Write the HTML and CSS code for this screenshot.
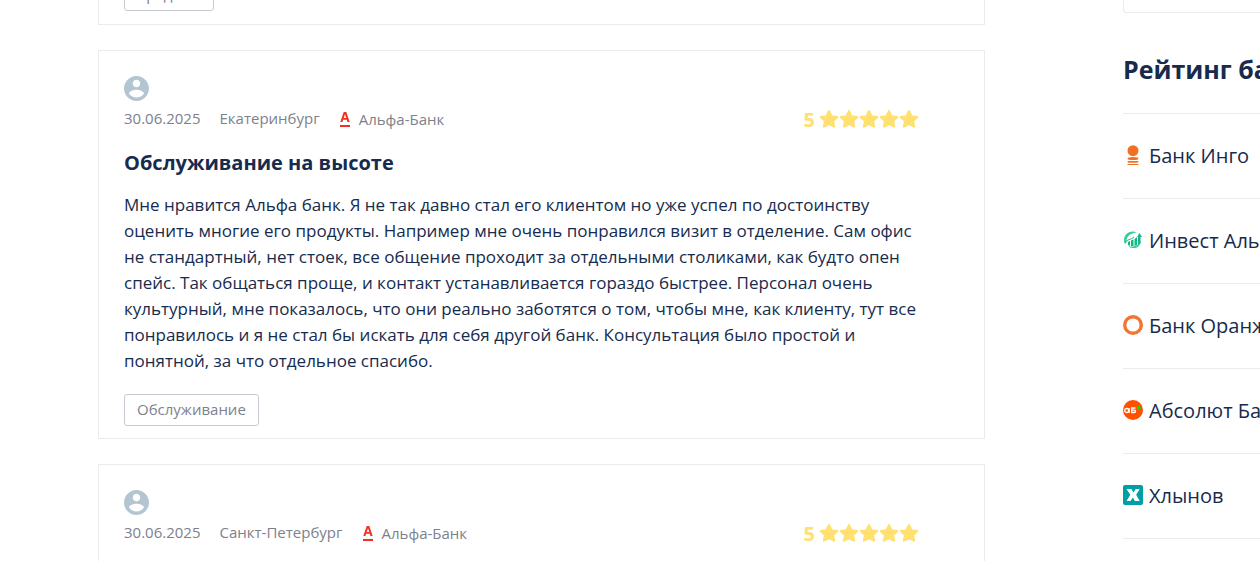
FILE: index.html
```html
<!doctype html>
<html lang="ru">
<head>
<meta charset="utf-8">
<title>Отзывы</title>
<link rel="stylesheet" href="styles.css">
</head>
<body>
<svg class="defs" width="0" height="0">
	<symbol id="user" viewBox="2 2 20 20"><path d="M12 2C6.500 2 2 6.500 2 12s4.500 10 10 10 10-4.500 10-10S17.500 2 12 2zm0 3c1.700 0 3 1.300 3 3s-1.300 3-3 3-3-1.300-3-3 1.300-3 3-3zm0 14.200c-2.500 0-4.700-1.300-6-3.200 0-2 4-3.100 6-3.100s6 1.100 6 3.100c-1.300 1.900-3.500 3.200-6 3.200z"/></symbol>
	<symbol id="alfa" viewBox="0 0 12 16"><path d="M1 14h10v2H1z"/><path fill-rule="evenodd" d="M4.700 1h2.600l3.400 10H8.500l-.7-2.200H4.100L3.400 11H1.300zM6 3.200L4.700 7.100h2.600z"/></symbol>
	<symbol id="star" viewBox="0 0 20 20"><path stroke-linejoin="round" d="M10 2l2.500 5.200 5.800.8-4.200 4 1 5.700L10 15l-5.100 2.700 1-5.700L1.700 8l5.800-.8z"/></symbol>
</svg>
<div class="page">
<main class="reviews">
	<article class="review">
		<a class="tag" href="#">Кредиты</a>
	</article>

	<article class="review">
		<svg class="user"><use href="#user"/></svg>
		<div class="info">
			<span class="meta">30.06.2025</span>
			<span class="meta">Екатеринбург</span>
			<a class="bank" href="#"><svg class="alfa"><use href="#alfa"/></svg>Альфа-Банк</a>
			<div class="rate">5<span class="stars"><svg><use href="#star"/></svg><svg><use href="#star"/></svg><svg><use href="#star"/></svg><svg><use href="#star"/></svg><svg><use href="#star"/></svg></span></div>
		</div>
		<h3>Обслуживание на высоте</h3>
		<p>Мне нравится Альфа банк. Я не так давно стал его клиентом но уже успел по достоинству оценить многие его продукты. Например мне очень понравился визит в отделение. Сам офис не стандартный, нет стоек, все общение проходит за отдельными столиками, как будто опен спейс. Так общаться проще, и контакт устанавливается гораздо быстрее. Персонал очень культурный, мне показалось, что они реально заботятся о том, чтобы мне, как клиенту, тут все понравилось и я не стал бы искать для себя другой банк. Консультация было простой и понятной, за что отдельное спасибо.</p>
		<a class="tag" href="#">Обслуживание</a>
	</article>

	<article class="review">
		<svg class="user"><use href="#user"/></svg>
		<div class="info">
			<span class="meta">30.06.2025</span>
			<span class="meta">Санкт-Петербург</span>
			<a class="bank" href="#"><svg class="alfa"><use href="#alfa"/></svg>Альфа-Банк</a>
			<div class="rate">5<span class="stars"><svg><use href="#star"/></svg><svg><use href="#star"/></svg><svg><use href="#star"/></svg><svg><use href="#star"/></svg><svg><use href="#star"/></svg></span></div>
		</div>
	</article>
</main>

<aside class="side">
	<div class="banner"></div>
	<h2>Рейтинг банков</h2>
	<ul class="rating">
		<li><a href="#"><svg viewBox="0 0 20 20"><g fill="#f37021"><circle cx="10" cy="5.700" r="5.500"/><ellipse cx="10" cy="13.500" rx="5.500" ry="1.500"/><path d="M4.500 16h11c0 1.300-1 1.800-2.500 1.800H7c-1.500 0-2.500-.5-2.500-1.800zM4.500 19h11v1h-11z"/></g></svg>Банк Инго</a></li>
		<li><a href="#"><svg viewBox="0 0 20 20"><path fill="#35cf98" d="M14 2.500C7-.5 1 4 1 10c0 1.500.5 3 1 4l1.500-2C3 7 7 3 14 2.500zM17.500 8c1 5-3 9-12 8.500 5 3.500 14 1.500 12-8.500z"/><path fill="#12b787" d="M5 12l2-1v5l-2-1zM8 10.500l2.500-1V16H8zM11.500 9L14 7v8l-2.500 1zM15 7h-1l2.500-4L19 7h-1.500v6L15 15z"/><path fill="none" stroke="#12b787" d="M2 13c2-4 6-3 9-6"/></svg>Инвест Альянс</a></li>
		<li><a href="#"><svg viewBox="0 0 20 20"><circle cx="10" cy="10" r="8.300" fill="none" stroke="#f37435" stroke-width="3.400"/></svg>Банк Оранжевый</a></li>
		<li><a href="#"><svg viewBox="0 0 20 20"><circle cx="10" cy="10" r="10" fill="#ff5000"/><g fill="none" stroke="#fff" stroke-width="1.300"><circle cx="3.700" cy="10.500" r="2"/><path d="M6.200 8v5M12.500 8H8.800v4.500h2.500a1.200 1.200 0 0 0 0-2.400H8.800"/></g><circle cx="15.800" cy="8" r="2" fill="#0be000"/></svg>Абсолют Банк</a></li>
		<li><a href="#"><svg viewBox="0 0 20 20"><rect width="20" height="20" rx="2" fill="#009fa6"/><path fill="#fff" d="M3.500 4h4.800l2.200 3.400L12.700 4h4l-3.500 5.700 3.500 6.300h-4.800l-2-3.500L7.600 16h-4l3.700-6.200z"/></svg>Хлынов</a></li>
	</ul>
</aside>
</div>
</body>
</html>
```
FILE: styles.css
```css
body{
	margin:0;
	background:#fff;
	color:#172b4d;
	font-family:"Open Sans", sans-serif;
	overflow:hidden;
}
a{
	color:inherit;
	text-decoration:none;
}
.defs{
	position:absolute;
}
.page{
	display:grid;
	grid-template-columns:minmax(0, 1fr) 137px;
	column-gap:138px;
	padding-left:98px;
	margin-top:-47px;
}
.reviews{
	display:flex;
	flex-direction:column;
	gap:25px;
}
.review{
	border:1px solid #ebebeb;
	padding:25px 25px 12px;
}
.review:first-child{
	padding-bottom:13px;
}
.user{
	display:block;
	width:25px;
	height:25px;
	fill:#b3c5d1;
}
.info{
	display:flex;
	align-items:center;
	gap:19px;
	height:36px;
	padding-right:40px;
	font-size:15px;
	color:#7d818c;
}
.meta{
	padding-bottom:2px;
}
.bank{
	display:flex;
	align-items:center;
	gap:8px;
}
.alfa{
	width:12px;
	height:16px;
	fill:#ef3124;
}
.rate{
	display:flex;
	align-items:center;
	gap:4px;
	margin-left:auto;
	color:#ffe070;
	font-size:20px;
	font-weight:700;
}
.stars{
	display:flex;
}
.stars svg{
	width:20px;
	height:20px;
	fill:#ffe070;
	stroke:#ffe070;
	stroke-width:2px;
}
.review h3{
	margin:12px 0 15px;
	font-size:20px;
	line-height:28px;
}
.review p{
	margin:0 0 20px;
	padding-right:34px;
	font-size:17px;
	line-height:26px;
}
.tag{
	display:inline-block;
	padding:0 12px 2px;
	border:1px solid #c9c9d3;
	border-radius:3px;
	font-size:15px;
	line-height:28px;
	color:#7d818c;
	vertical-align:top;
}
.side{
	white-space:nowrap;
	overflow:hidden;
}
.banner{
	height:58px;
	border:1px solid #ebebeb;
	border-right:0;
	border-radius:3px 0 0 3px;
}
.side h2{
	margin:39px 0 26px;
	font-size:25px;
	line-height:35px;
}
.rating{
	margin:0;
	padding:0;
	list-style:none;
	border-top:1px solid #ebebeb;
}
.rating li{
	border-bottom:1px solid #ebebeb;
}
.rating a{
	display:flex;
	align-items:center;
	gap:6px;
	height:82px;
	padding-bottom:2px;
	font-size:20px;
}
.rating svg{
	flex:none;
	width:20px;
	height:20px;
}
```
